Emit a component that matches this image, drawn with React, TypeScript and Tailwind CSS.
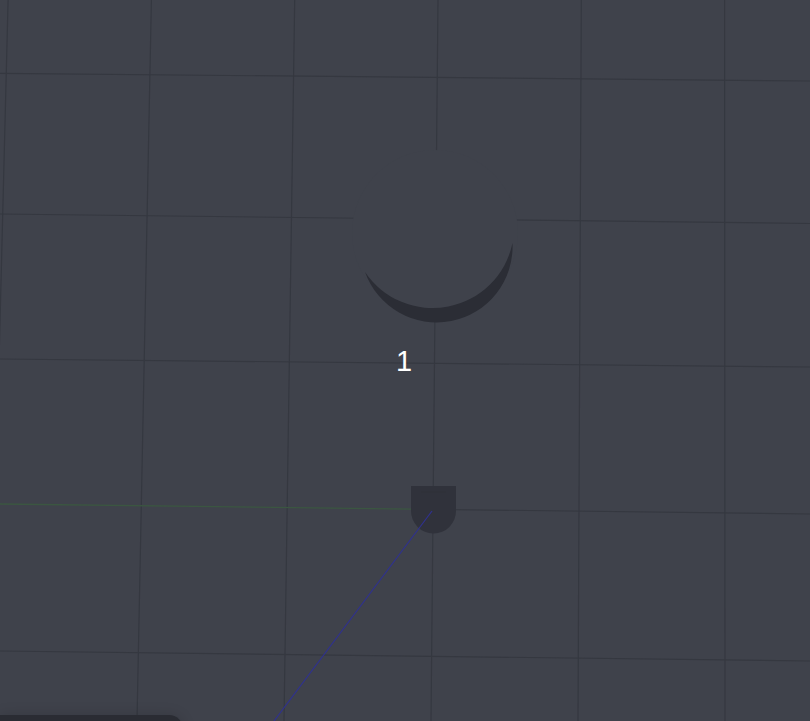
import React from "react";

const BG = "#3f424b";
const GRID = "#353840";

export default function App() {
  const verticals = [-3, -2, -1, 0, 1, 2].map((i) => ({
    x1: 438 + 143.3 * i,
    x2: 431 + 147 * i,
  }));
  const horizontals = [
    [73.3, 81],
    [214, 223.5],
    [359, 367],
    [504, 514],
    [651, 661],
  ];
  return (
    <div className="relative w-[810px] h-[721px] overflow-hidden bg-[#3f424b] font-['Liberation_Sans',Arial,sans-serif]">
      <svg className="absolute inset-0" width="810" height="721" viewBox="0 0 810 721">
        {verticals.map((v, k) => (
          <line key={"v" + k} x1={v.x1} y1={0} x2={v.x2} y2={721} stroke={GRID} strokeWidth={1.2} />
        ))}
        {horizontals.map((h, k) =>
          k === 3 ? (
            <g key={"h" + k}>
              <line x1={0} y1={h[0]} x2={432} y2={h[0] + (h[1] - h[0]) * (432 / 810)} stroke="#3b5641" strokeWidth={1.4} />
              <line x1={432} y1={h[0] + (h[1] - h[0]) * (432 / 810)} x2={810} y2={h[1]} stroke={GRID} strokeWidth={1.2} />
            </g>
          ) : (
            <line key={"h" + k} x1={0} y1={h[0]} x2={810} y2={h[1]} stroke={GRID} strokeWidth={1.2} />
          )
        )}
        {/* occluding hemisphere */}
        <circle cx={435} cy={233} r={83} fill={BG} />
        {/* crescent shadow */}
        <path
          d="M 365 272 A 76 76 0 0 0 512.5 243 A 81.5 81.5 0 0 1 365 272 Z"
          fill="#2b2d35"
        />
        {/* shield marker */}
        <path d="M 411 486 L 456 486 L 456 511 A 22.5 22.5 0 0 1 411 511 Z" fill="#30323b" />
        <path d="M 421 492 L 446 492" stroke="#2e3038" strokeWidth={1} fill="none" />
        {/* blue link line */}
        <line x1={432} y1={511} x2={274} y2={721} stroke="#2f318f" strokeWidth={1.2} />
      </svg>
      <div className="absolute left-[396px] top-[347px] text-[29px] leading-none text-white">1</div>
      <div className="absolute left-0 top-[715px] w-[183px] h-[20px] rounded-tr-[14px] bg-[#2a2c33] shadow-[0_0_14px_rgba(0,0,0,0.15)]" />
    </div>
  );
}
